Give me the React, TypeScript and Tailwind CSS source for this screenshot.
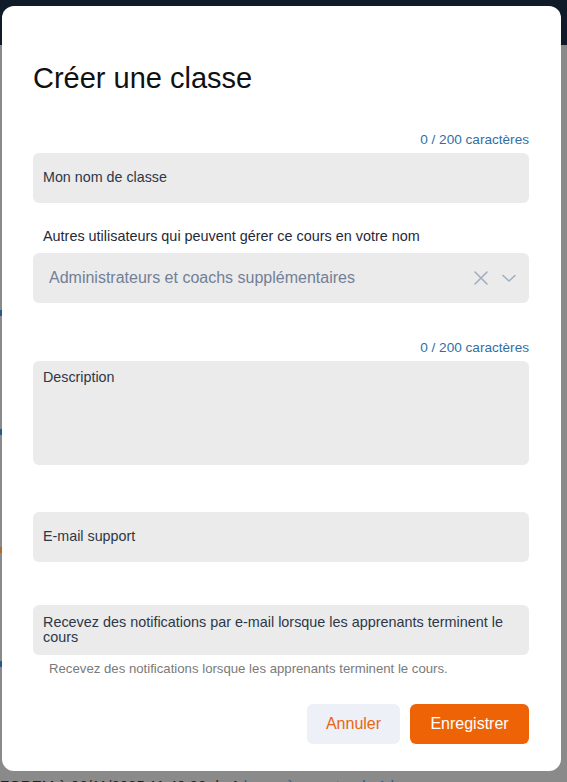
import React from 'react';

const Counter = () => (
  <div className="text-right text-[13.6px] leading-4 text-[#2f6fa3]">0 / 200 caractères</div>
);

export default function App() {
  return (
    <div className="relative w-[567px] h-[782px] overflow-hidden bg-[#8a8a8a] font-[Arial,'Liberation_Sans',sans-serif]">
      {/* page behind the overlay */}
      <div className="h-[45px] bg-[#101b2a]" />
      <div className="flex flex-col text-[14px] text-[#1a1a1a]">
        <div className="mt-[265px] h-[6px] w-[2px] bg-[#2a5a86]" />
        <div className="mt-[113px] h-[6px] w-[2px] bg-[#2a5a86]" />
        <div className="mt-[112px] h-[6px] w-[2px] bg-[#b06a2a]" />
        <div className="mt-[108px] h-[6px] w-[2px] bg-[#2a5a86]" />
        <div className="mt-[110px] whitespace-nowrap text-[15px] leading-[18px] text-[#222]">
          FOREM à 06/11/2025 11:40:28 de 1 <span className="text-[#2a5a86]">heure à compter de 1 heure</span>
        </div>
      </div>

      {/* modal */}
      <div className="absolute left-[2px] top-[6px] w-[559px] h-[765px] rounded-xl bg-white pl-[31px] pr-[32px] pt-[55px]">
        <h1 className="text-[29px] leading-[34px] text-[#111]">Créer une classe</h1>

        <div className="mt-[37px]">
          <Counter />
        </div>
        <div className="mt-[5px] h-[50px] rounded-md bg-[#ebebeb] px-[10px] flex items-center text-[14.3px] text-[#2d3748]">
          Mon nom de classe
        </div>

        <div className="mt-[25px] pl-[10px] text-[14.4px] leading-[17px] text-[#1f2937]">
          Autres utilisateurs qui peuvent gérer ce cours en votre nom
        </div>
        <div className="mt-[8px] h-[50px] rounded-md bg-[#ebebeb] pl-[16px] pr-[13px] flex items-center">
          <span className="flex-1 text-[16px] text-[#718096]">Administrateurs et coachs supplémentaires</span>
          <svg width="16" height="16" viewBox="0 0 16 16" fill="none" stroke="#a0aec0" strokeWidth="1.6" strokeLinecap="round">
            <path d="M2 2l12 12M14 2L2 14" />
          </svg>
          <svg className="ml-[13px]" width="14" height="10" viewBox="0 0 14 10" fill="none" stroke="#a0aec0" strokeWidth="1.6" strokeLinecap="round" strokeLinejoin="round">
            <path d="M1 2.5l6 5.5 6-5.5" />
          </svg>
        </div>

        <div className="mt-[37px]">
          <Counter />
        </div>
        <div className="mt-[5px] h-[104px] rounded-md bg-[#ebebeb] px-[10px] pt-[8px] text-[14.3px] leading-[17px] text-[#2d3748]">
          Description
        </div>

        <div className="mt-[47px] h-[50px] rounded-md bg-[#ebebeb] px-[10px] flex items-center text-[14.3px] text-[#2d3748]">
          E-mail support
        </div>

        <div className="mt-[43px] h-[50px] rounded-md bg-[#ebebeb] px-[10px] flex items-center text-[14.4px] leading-[15px] text-[#2d3748]">
          Recevez des notifications par e-mail lorsque les apprenants terminent le cours
        </div>
        <div className="mt-[7px] pl-[16px] text-[13.2px] leading-[14px] text-[#7a7a7a]">
          Recevez des notifications lorsque les apprenants terminent le cours.
        </div>

        <div className="mt-[28px] flex justify-end gap-[10px]">
          <button className="h-[40px] w-[93px] rounded-md bg-[#edf0f7] text-[16px] text-[#ea650f]">Annuler</button>
          <button className="h-[40px] w-[119px] rounded-md bg-[#ee6306] text-[16px] text-white">Enregistrer</button>
        </div>
      </div>
    </div>
  );
}
